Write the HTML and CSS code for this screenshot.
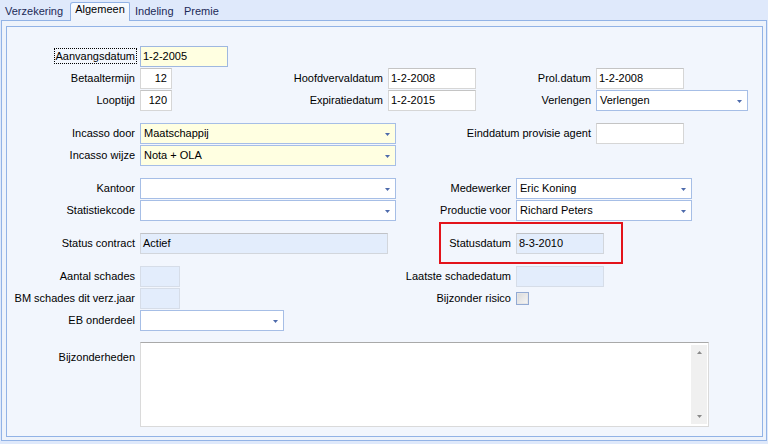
FILE: index.html
```html
<!DOCTYPE html>
<html>
<head>
<meta charset="utf-8">
<link rel="stylesheet" href="styles.css">
</head>
<body>
<div class="tabs">
  <div class="tab t1">Verzekering</div>
  <div class="tab sel">Algemeen</div>
  <div class="tab t3">Indeling</div>
  <div class="tab">Premie</div>
</div>
<div class="frame">
  <div class="panel">
    <div class="row">
      <div class="lbl la lf"><span class="focus">Aanvangsdatum</span></div>
      <div class="inp yellow focused w88">1-2-2005</div>
    </div>
    <div class="row">
      <div class="lbl la">Betaaltermijn</div>
      <div class="inp num w32">12</div>
      <div class="lbl l216">Hoofdvervaldatum</div>
      <div class="inp w88">1-2-2008</div>
      <div class="lbl l120">Prol.datum</div>
      <div class="inp w88">1-2-2008</div>
    </div>
    <div class="row">
      <div class="lbl la">Looptijd</div>
      <div class="inp num w32">120</div>
      <div class="lbl l216">Expiratiedatum</div>
      <div class="inp w88">1-2-2015</div>
      <div class="lbl l120">Verlengen</div>
      <div class="combo w152"><span>Verlengen</span><svg class="arr" width="5" height="3" viewBox="0 0 5 3"><polygon points="0,0 5,0 2.5,3" fill="#4d6aab"/></svg></div>
    </div>
    <div class="row gap">
      <div class="lbl la">Incasso door</div>
      <div class="combo yellow w256"><span>Maatschappij</span><svg class="arr" width="5" height="3" viewBox="0 0 5 3"><polygon points="0,0 5,0 2.5,3" fill="#4d6aab"/></svg></div>
      <div class="lbl l200">Einddatum provisie agent</div>
      <div class="inp w88"></div>
    </div>
    <div class="row">
      <div class="lbl la">Incasso wijze</div>
      <div class="combo yellow w256"><span>Nota + OLA</span><svg class="arr" width="5" height="3" viewBox="0 0 5 3"><polygon points="0,0 5,0 2.5,3" fill="#4d6aab"/></svg></div>
    </div>
    <div class="row gap">
      <div class="lbl la">Kantoor</div>
      <div class="combo w256"><span></span><svg class="arr" width="5" height="3" viewBox="0 0 5 3"><polygon points="0,0 5,0 2.5,3" fill="#4d6aab"/></svg></div>
      <div class="lbl l120">Medewerker</div>
      <div class="combo w176"><span>Eric Koning</span><svg class="arr" width="5" height="3" viewBox="0 0 5 3"><polygon points="0,0 5,0 2.5,3" fill="#4d6aab"/></svg></div>
    </div>
    <div class="row">
      <div class="lbl la">Statistiekcode</div>
      <div class="combo w256"><span></span><svg class="arr" width="5" height="3" viewBox="0 0 5 3"><polygon points="0,0 5,0 2.5,3" fill="#4d6aab"/></svg></div>
      <div class="lbl l120">Productie voor</div>
      <div class="combo w176"><span>Richard Peters</span><svg class="arr" width="5" height="3" viewBox="0 0 5 3"><polygon points="0,0 5,0 2.5,3" fill="#4d6aab"/></svg></div>
    </div>
    <div class="row gap rel">
      <div class="lbl la">Status contract</div>
      <div class="inp ro w248">Actief</div>
      <div class="lbl l128">Statusdatum</div>
      <div class="inp ro w88">8-3-2010</div>
      <div class="highlight"></div>
    </div>
    <div class="row gap">
      <div class="lbl la">Aantal schades</div>
      <div class="inp ro2 w40"></div>
      <div class="lbl l336">Laatste schadedatum</div>
      <div class="inp ro2 w88"></div>
    </div>
    <div class="row">
      <div class="lbl la">BM schades dit verz.jaar</div>
      <div class="inp ro2 w40"></div>
      <div class="lbl l336">Bijzonder risico</div>
      <div class="check"></div>
    </div>
    <div class="row">
      <div class="lbl la">EB onderdeel</div>
      <div class="combo w144"><span></span><svg class="arr" width="5" height="3" viewBox="0 0 5 3"><polygon points="0,0 5,0 2.5,3" fill="#4d6aab"/></svg></div>
    </div>
    <div class="row tall">
      <div class="lbl la ltop">Bijzonderheden</div>
      <div class="memo">
        <div class="scroll">
          <svg width="5" height="3" viewBox="0 0 5 3"><polygon points="0,3 5,3 2.5,0" fill="#8a8a8a"/></svg>
          <svg width="5" height="3" viewBox="0 0 5 3"><polygon points="0,0 5,0 2.5,3" fill="#8a8a8a"/></svg>
        </div>
      </div>
    </div>
  </div>
</div>
</body>
</html>
```

FILE: styles.css
```css
html, body {
  margin: 0;
  padding: 0;
}
body {
  width: 768px;
  height: 444px;
  overflow: hidden;
  background: #dfe9fb;
  font-family: "Liberation Sans", Arial, sans-serif;
  font-size: 11px;
  color: #000;
}
.tabs {
  display: flex;
  height: 20px;
}
.tab {
  box-sizing: border-box;
  flex: none;
  height: 20px;
  padding: 3px 5px 0 5px;
  line-height: 17px;
  color: #1c2a57;
  white-space: nowrap;
}
.t1 { width: 70px; }
.t3 { width: 49px; }
.tab.sel {
  position: relative;
  z-index: 1;
  width: 60px;
  height: 19px;
  margin-top: 2px;
  padding: 0;
  line-height: 13px;
  text-align: center;
  color: #000;
  border: 1px solid #92b3e6;
  border-bottom: none;
  border-radius: 3px 2px 0 0;
  background: linear-gradient(#f8fbff, #eef3fb);
}
.frame {
  box-sizing: border-box;
  height: 421px;
  margin: 0 1px;
  border: 1px solid #92b3e6;
  padding: 5px 3px 3px 4px;
  background: #eef3fb;
}
.panel {
  box-sizing: border-box;
  height: 100%;
  border: 1px solid #92b3e6;
  background: #f2f6fd;
  padding-top: 19px;
}
.row {
  display: flex;
  align-items: center;
  height: 21px;
  margin-bottom: 1px;
}
.row.gap { margin-top: 12px; }
.row.rel { position: relative; }
.row.tall {
  height: 85px;
  margin-top: 11px;
  align-items: flex-start;
}
.lbl {
  flex: none;
  box-sizing: border-box;
  text-align: right;
  padding-right: 5px;
  white-space: nowrap;
  line-height: 21px;
  height: 21px;
}
.lbl.lf { padding-right: 3px; }
.lbl.ltop { padding-top: 5px; height: auto; }
.focus {
  display: inline-block;
  border: 1px dotted #000;
  padding: 0 1px;
  line-height: 14px;
}
.la { width: 133px; }
.l216 { width: 216px; }
.l120 { width: 120px; }
.l200 { width: 200px; }
.l128 { width: 128px; }
.l336 { width: 336px; }
.w32 { width: 32px; }
.w40 { width: 40px; }
.w88 { width: 88px; }
.w144 { width: 144px; }
.w152 { width: 152px; }
.w176 { width: 176px; }
.w248 { width: 248px; }
.w256 { width: 256px; }
.inp {
  flex: none;
  box-sizing: border-box;
  height: 21px;
  border: 1px solid #d6d6d6;
  border-top-color: #c4c4c4;
  background: #fff;
  padding: 0 3px 0 2px;
  line-height: 19px;
  white-space: nowrap;
  overflow: hidden;
}
.inp.num {
  text-align: right;
  padding-right: 4px;
}
.yellow { background: #ffffe1; }
.inp.focused {
  border-color: #9fb8e0;
}
.inp.ro {
  background: #e3edfc;
  border-color: #d2d6dc;
  border-top-color: #c0c2c6;
}
.inp.ro2 {
  background: #e3edfc;
  border-color: #d6dde8;
}
.combo {
  flex: none;
  box-sizing: border-box;
  height: 21px;
  display: flex;
  align-items: center;
  justify-content: space-between;
  border: 1px solid #a6bee6;
  background: #fff;
  padding: 0 5px 0 3px;
  line-height: 19px;
  white-space: nowrap;
}
.combo.yellow { background: #ffffe1; }
.arr {
  flex: none;
  display: block;
  margin-top: 1px;
}
.check {
  flex: none;
  box-sizing: border-box;
  width: 13px;
  height: 13px;
  border: 1px solid #93aad3;
  background: linear-gradient(135deg, #d9d9d9, #f7f7f7);
  box-shadow: inset 0 0 0 1px #e6e6e6;
}
.highlight {
  position: absolute;
  box-sizing: border-box;
  left: 432px;
  top: -11px;
  width: 184px;
  height: 42px;
  border: 2px solid #e3131b;
}
.memo {
  flex: none;
  box-sizing: border-box;
  width: 569px;
  height: 85px;
  border: 1px solid #dadada;
  border-top-color: #a9a9a9;
  background: #fff;
  padding: 2px 1px 2px 0;
  display: flex;
  justify-content: flex-end;
}
.scroll {
  box-sizing: border-box;
  width: 16px;
  height: 100%;
  background: #f0f0f0;
  display: flex;
  flex-direction: column;
  justify-content: space-between;
  align-items: center;
  padding: 6px 0 6px 0;
}
.scroll svg { display: block; }
```
